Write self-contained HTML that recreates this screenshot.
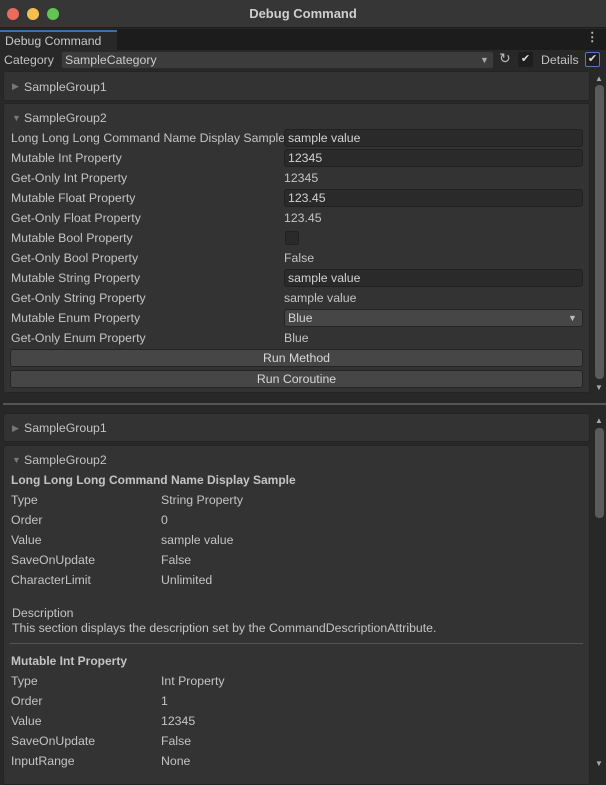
<!DOCTYPE html>
<html><head><style>
*{box-sizing:border-box;margin:0;padding:0}
body{width:606px;height:772px;background:#282828;font-family:"Liberation Sans",sans-serif;font-size:12.3px;color:#c4c4c4;position:relative;overflow:hidden;border-radius:10px}
.a{position:absolute;white-space:nowrap}
.box{position:absolute;background:#333;border:1px solid #242424;border-radius:3px}
.inp{position:absolute;background:#2a2a2a;border:1px solid #212121;border-radius:3px;padding-left:3px;line-height:17px;color:#d2d2d2}
.btn{position:absolute;background:#464646;border:1px solid #242424;border-radius:3px;text-align:center;line-height:16px;color:#d8d8d8}
.tri{color:#777;font-size:9px}
.b{font-weight:bold;font-size:12px}
.sb{position:absolute;background:#5b5b5b;border-radius:4px}
</style></head><body>
<div class="a" style="left:0;top:0;width:606px;height:28px;background:#363636;border-bottom:1px solid #1e1e1e"></div>
<div class="a" style="left:7px;top:8px;width:12px;height:12px;border-radius:6px;background:#ed6a5e"></div>
<div class="a" style="left:27px;top:8px;width:12px;height:12px;border-radius:6px;background:#f5bf4f"></div>
<div class="a" style="left:47px;top:8px;width:12px;height:12px;border-radius:6px;background:#61c554"></div>
<div class="a b" style="left:0;width:606px;top:6px;text-align:center;font-size:13px;color:#cfcfcf">Debug Command</div>
<div class="a" style="left:0;top:29px;width:606px;height:21px;background:#1c1c1c"></div>
<div class="a" style="left:0;top:30px;width:117px;height:20px;background:#282828;border-top:2px solid #3a72b0;padding:2px 0 0 5px;color:#c8c8c8">Debug Command</div>
<div class="a" style="left:586px;top:30px;color:#bbb;font-weight:bold">⋮</div>
<div class="a" style="left:4px;top:53px">Category</div>
<div class="inp" style="left:61px;top:51px;width:433px;height:18px;background:#3c3c3c;border-color:#2a2a2a;color:#ccc">SampleCategory</div>
<div class="a tri" style="left:480px;top:55px;color:#aaa">▼</div>
<div class="a" style="left:499px;top:50px;font-size:14px;color:#bbb">↻</div>
<div class="a" style="left:518px;top:52px;width:15px;height:15px;background:#1e1e1e;border-radius:2px;color:#ddd;text-align:center;line-height:15px;font-size:11px">✔</div>
<div class="a" style="left:541px;top:53px">Details</div>
<div class="a" style="left:585px;top:52px;width:15px;height:15px;background:#1e1e1e;border:1px solid #4a80c0;border-radius:2px;color:#ddd;text-align:center;line-height:13px;font-size:11px">✔</div>

<div class="box" style="left:3px;top:71px;width:587px;height:30px"></div>
<div class="a tri" style="left:12px;top:81px">▶</div>
<div class="a" style="left:24px;top:80px">SampleGroup1</div>
<div class="box" style="left:3px;top:103px;width:587px;height:290px"></div>
<div class="a tri" style="left:12px;top:113px">▼</div>
<div class="a" style="left:24px;top:111px">SampleGroup2</div>
<div class="a" style="left:11px;top:131px;width:273px;overflow:hidden">Long Long Long Command Name Display Sample</div>
<div class="inp" style="left:284px;top:129px;width:299px;height:18px">sample value</div>
<div class="a" style="left:11px;top:151px">Mutable Int Property</div>
<div class="inp" style="left:284px;top:149px;width:299px;height:18px">12345</div>
<div class="a" style="left:11px;top:171px">Get-Only Int Property</div><div class="a" style="left:284px;top:171px">12345</div>
<div class="a" style="left:11px;top:191px">Mutable Float Property</div>
<div class="inp" style="left:284px;top:189px;width:299px;height:18px">123.45</div>
<div class="a" style="left:11px;top:211px">Get-Only Float Property</div><div class="a" style="left:284px;top:211px">123.45</div>
<div class="a" style="left:11px;top:231px">Mutable Bool Property</div>
<div class="a" style="left:285px;top:231px;width:14px;height:14px;background:#2a2a2a;border:1px solid #212121;border-radius:2px"></div>
<div class="a" style="left:11px;top:251px">Get-Only Bool Property</div><div class="a" style="left:284px;top:251px">False</div>
<div class="a" style="left:11px;top:271px">Mutable String Property</div>
<div class="inp" style="left:284px;top:269px;width:299px;height:18px">sample value</div>
<div class="a" style="left:11px;top:291px">Get-Only String Property</div><div class="a" style="left:284px;top:291px">sample value</div>
<div class="a" style="left:11px;top:311px">Mutable Enum Property</div>
<div class="inp" style="left:284px;top:309px;width:299px;height:18px;background:#464646;border-color:#242424">Blue</div>
<div class="a tri" style="left:568px;top:313px;color:#bbb">▼</div>
<div class="a" style="left:11px;top:331px">Get-Only Enum Property</div><div class="a" style="left:284px;top:331px">Blue</div>
<div class="btn" style="left:10px;top:349px;width:573px;height:18px">Run Method</div>
<div class="btn" style="left:10px;top:370px;width:573px;height:18px">Run Coroutine</div>
<div class="a tri" style="left:595px;top:74px;color:#aaa;font-size:8px">▲</div>
<div class="sb" style="left:595px;top:85px;width:9px;height:294px"></div>
<div class="a tri" style="left:595px;top:383px;color:#aaa;font-size:8px">▼</div>

<div class="a" style="left:3px;top:403px;width:603px;height:2px;background:#555"></div>

<div class="box" style="left:3px;top:413px;width:587px;height:29px"></div>
<div class="a tri" style="left:12px;top:423px">▶</div>
<div class="a" style="left:24px;top:421px">SampleGroup1</div>
<div class="box" style="left:3px;top:445px;width:587px;height:340px"></div>
<div class="a tri" style="left:12px;top:455px">▼</div>
<div class="a" style="left:24px;top:453px">SampleGroup2</div>
<div class="a b" style="left:11px;top:473px">Long Long Long Command Name Display Sample</div>
<div class="a" style="left:11px;top:493px">Type</div><div class="a" style="left:161px;top:493px">String Property</div>
<div class="a" style="left:11px;top:513px">Order</div><div class="a" style="left:161px;top:513px">0</div>
<div class="a" style="left:11px;top:533px">Value</div><div class="a" style="left:161px;top:533px">sample value</div>
<div class="a" style="left:11px;top:553px">SaveOnUpdate</div><div class="a" style="left:161px;top:553px">False</div>
<div class="a" style="left:11px;top:573px">CharacterLimit</div><div class="a" style="left:161px;top:573px">Unlimited</div>
<div class="a" style="left:12px;top:606px">Description</div>
<div class="a" style="left:12px;top:621px">This section displays the description set by the CommandDescriptionAttribute.</div>
<div class="a" style="left:10px;top:643px;width:573px;height:1px;background:#555"></div>
<div class="a b" style="left:11px;top:654px">Mutable Int Property</div>
<div class="a" style="left:11px;top:674px">Type</div><div class="a" style="left:161px;top:674px">Int Property</div>
<div class="a" style="left:11px;top:694px">Order</div><div class="a" style="left:161px;top:694px">1</div>
<div class="a" style="left:11px;top:714px">Value</div><div class="a" style="left:161px;top:714px">12345</div>
<div class="a" style="left:11px;top:734px">SaveOnUpdate</div><div class="a" style="left:161px;top:734px">False</div>
<div class="a" style="left:11px;top:754px">InputRange</div><div class="a" style="left:161px;top:754px">None</div>
<div class="a tri" style="left:595px;top:416px;color:#aaa;font-size:8px">▲</div>
<div class="sb" style="left:595px;top:428px;width:9px;height:90px"></div>
<div class="a tri" style="left:595px;top:759px;color:#aaa;font-size:8px">▼</div>
</body></html>
